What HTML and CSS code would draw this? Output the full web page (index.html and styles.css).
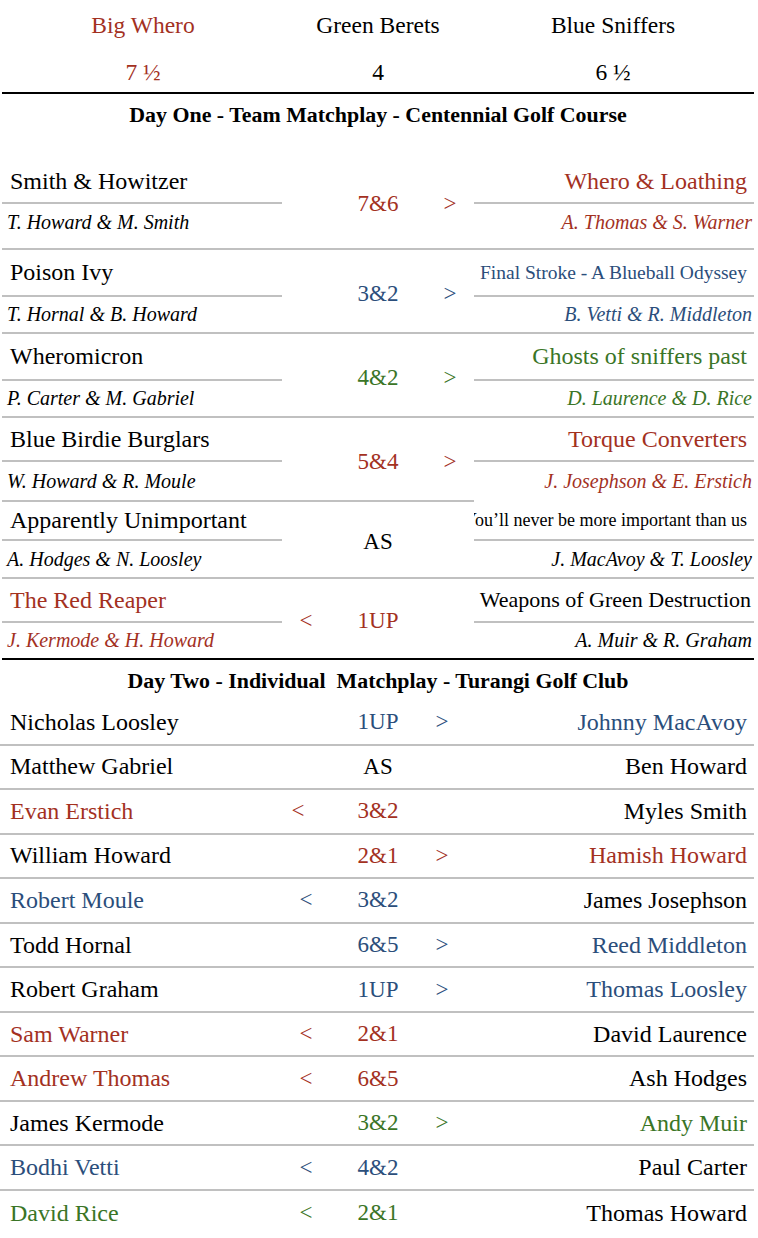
FILE: index.html
```html
<!DOCTYPE html>
<html lang="en">
<head>
<meta charset="utf-8">
<title>Matchplay Results</title>
<link rel="stylesheet" href="styles.css">
</head>
<body>
<div class="page">
  <header class="standings">
    <div class="st-name red">Big Whero</div>
    <div class="st-name">Green Berets</div>
    <div class="st-name">Blue Sniffers</div>
    <div class="st-score red">7 ½</div>
    <div class="st-score">4</div>
    <div class="st-score">6 ½</div>
  </header>

  <h2 class="day-title day-one">Day One - Team Matchplay - Centennial Golf Course</h2>

  <section class="day1">
    <div class="match m1">
      <div class="side left">
        <div class="team">Smith &amp; Howitzer</div>
        <div class="players">T. Howard &amp; M. Smith</div>
      </div>
      <div class="mid red"><span class="arr"></span><span class="score">7&amp;6</span><span class="arr">&gt;</span></div>
      <div class="side right red">
        <div class="team">Whero &amp; Loathing</div>
        <div class="players">A. Thomas &amp; S. Warner</div>
      </div>
    </div>

    <div class="match m2">
      <div class="side left">
        <div class="team">Poison Ivy</div>
        <div class="players">T. Hornal &amp; B. Howard</div>
      </div>
      <div class="mid blue"><span class="arr"></span><span class="score">3&amp;2</span><span class="arr">&gt;</span></div>
      <div class="side right blue">
        <div class="team small-a">Final Stroke - A Blueball Odyssey</div>
        <div class="players">B. Vetti &amp; R. Middleton</div>
      </div>
    </div>

    <div class="match m3">
      <div class="side left">
        <div class="team">Wheromicron</div>
        <div class="players">P. Carter &amp; M. Gabriel</div>
      </div>
      <div class="mid green"><span class="arr"></span><span class="score">4&amp;2</span><span class="arr">&gt;</span></div>
      <div class="side right green">
        <div class="team">Ghosts of sniffers past</div>
        <div class="players">D. Laurence &amp; D. Rice</div>
      </div>
    </div>

    <div class="match m4">
      <div class="side left">
        <div class="team">Blue Birdie Burglars</div>
        <div class="players">W. Howard &amp; R. Moule</div>
      </div>
      <div class="mid red"><span class="arr"></span><span class="score">5&amp;4</span><span class="arr">&gt;</span></div>
      <div class="side right red open">
        <div class="team">Torque Converters</div>
        <div class="players">J. Josephson &amp; E. Erstich</div>
      </div>
    </div>

    <div class="match m5">
      <div class="side left">
        <div class="team">Apparently Unimportant</div>
        <div class="players">A. Hodges &amp; N. Loosley</div>
      </div>
      <div class="mid"><span class="arr"></span><span class="score">AS</span><span class="arr"></span></div>
      <div class="side right">
        <div class="team small-b"><span>You’ll never be more important than us</span></div>
        <div class="players">J. MacAvoy &amp; T. Loosley</div>
      </div>
    </div>

    <div class="match m6 last">
      <div class="side left red">
        <div class="team">The Red Reaper</div>
        <div class="players">J. Kermode &amp; H. Howard</div>
      </div>
      <div class="mid red"><span class="arr">&lt;</span><span class="score">1UP</span><span class="arr"></span></div>
      <div class="side right">
        <div class="team small-c">Weapons of Green Destruction</div>
        <div class="players">A. Muir &amp; R. Graham</div>
      </div>
    </div>
  </section>

  <h2 class="day-title day-two">Day Two - Individual&nbsp; Matchplay - Turangi Golf Club</h2>

  <section class="day2">
    <div class="row"><span class="p-left">Nicholas Loosley</span><span class="arr"></span><span class="score blue">1UP</span><span class="arr blue">&gt;</span><span class="p-right blue">Johnny MacAvoy</span></div>
    <div class="row"><span class="p-left">Matthew Gabriel</span><span class="arr"></span><span class="score">AS</span><span class="arr"></span><span class="p-right">Ben Howard</span></div>
    <div class="row"><span class="p-left red">Evan Erstich</span><span class="arr red shift">&lt;</span><span class="score red">3&amp;2</span><span class="arr"></span><span class="p-right">Myles Smith</span></div>
    <div class="row"><span class="p-left">William Howard</span><span class="arr"></span><span class="score red">2&amp;1</span><span class="arr red">&gt;</span><span class="p-right red">Hamish Howard</span></div>
    <div class="row"><span class="p-left blue">Robert Moule</span><span class="arr blue">&lt;</span><span class="score blue">3&amp;2</span><span class="arr"></span><span class="p-right">James Josephson</span></div>
    <div class="row"><span class="p-left">Todd Hornal</span><span class="arr"></span><span class="score blue">6&amp;5</span><span class="arr blue">&gt;</span><span class="p-right blue">Reed Middleton</span></div>
    <div class="row"><span class="p-left">Robert Graham</span><span class="arr"></span><span class="score blue">1UP</span><span class="arr blue">&gt;</span><span class="p-right blue">Thomas Loosley</span></div>
    <div class="row"><span class="p-left red">Sam Warner</span><span class="arr red">&lt;</span><span class="score red">2&amp;1</span><span class="arr"></span><span class="p-right">David Laurence</span></div>
    <div class="row"><span class="p-left red">Andrew Thomas</span><span class="arr red">&lt;</span><span class="score red">6&amp;5</span><span class="arr"></span><span class="p-right">Ash Hodges</span></div>
    <div class="row"><span class="p-left">James Kermode</span><span class="arr"></span><span class="score green">3&amp;2</span><span class="arr green">&gt;</span><span class="p-right green">Andy Muir</span></div>
    <div class="row"><span class="p-left blue">Bodhi Vetti</span><span class="arr blue">&lt;</span><span class="score blue">4&amp;2</span><span class="arr"></span><span class="p-right">Paul Carter</span></div>
    <div class="row last"><span class="p-left green">David Rice</span><span class="arr green">&lt;</span><span class="score green">2&amp;1</span><span class="arr"></span><span class="p-right">Thomas Howard</span></div>
  </section>
</div>
</body>
</html>
```

FILE: styles.css
```css
* { box-sizing: border-box; }

body {
  margin: 0;
  background: #fff;
  color: #000;
  font-family: "Liberation Serif", "Times New Roman", serif;
}

.page {
  width: 752px;
  margin-left: 2px;
}

.red { color: #a3311f; }
.blue { color: #2b4e7b; }
.green { color: #3a7526; }

/* standings header */
.standings {
  display: grid;
  grid-template-columns: repeat(3, 235px);
  grid-template-rows: 50px 42px;
  justify-content: center;
  border-bottom: 2px solid #000;
  font-size: 23.5px;
}
.st-name, .st-score {
  display: flex;
  align-items: center;
  justify-content: center;
}
.st-score { padding-top: 2px; }

.day-title {
  margin: 0;
  font-size: 21.9px;
  font-weight: bold;
  text-align: center;
  display: flex;
  align-items: center;
  justify-content: center;
  white-space: nowrap;
}
.day-one { height: 42px; margin-bottom: 19px; }
.day-two { height: 41px; }

/* day one matches */
.match {
  display: grid;
  grid-template-columns: 280px 192px 280px;
}
.side {
  display: flex;
  flex-direction: column;
  border-bottom: 2px solid #c0c0c0;
  min-width: 0;
}
.side.open { border-bottom-color: transparent; }
.mid {
  display: grid;
  grid-template-columns: 48px 96px 48px;
  align-items: center;
  justify-items: center;
  padding-top: 5px;
  border-bottom: 2px solid #c0c0c0;
  font-size: 23px;
}
.match.last .side,
.match.last .mid { border-bottom: 2px solid #000; }

.team {
  display: flex;
  align-items: center;
  font-size: 24px;
  white-space: nowrap;
  border-bottom: 2px solid #c0c0c0;
  overflow: hidden;
}
.players {
  display: flex;
  align-items: center;
  flex: 1;
  font-size: 20px;
  font-style: italic;
  white-space: nowrap;
}
.left .team { padding-left: 8px; }
.left .players { padding-left: 5px; }
.right .team { justify-content: flex-end; padding-right: 7px; }
.right .players { justify-content: flex-end; padding-right: 2px; }

.team.small-a { font-size: 19.5px; }
.team.small-b { font-size: 18px; }
.team.small-c { font-size: 22px; padding-right: 3px; }

.m1 .team { height: 49px; padding-top: 5px; }
.m1 .players { padding-bottom: 8px; }
.m2 .team, .m3 .team { height: 47px; }
.m4 .team { height: 44px; }
.m5 .team { height: 39px; }
.m6 .team { height: 44px; }
.m1 .side, .m1 .mid { height: 95px; }
.m2 .side, .m2 .mid,
.m3 .side, .m3 .mid,
.m4 .side, .m4 .mid { height: 84px; }
.m5 .side, .m5 .mid { height: 77px; }
.m6 .side, .m6 .mid { height: 81px; }

/* day two */
.row {
  display: grid;
  grid-template-columns: 282px 48px 96px 32px 1fr;
  align-items: center;
  height: 44.55px;
  border-bottom: 2px solid #c0c0c0;
  font-size: 24px;
  margin-left: -2px;
}
.row.last { border-bottom: none; }
.row .p-left { padding-left: 10px; white-space: nowrap; }
.row .p-right { text-align: right; padding-right: 7px; white-space: nowrap; }
.row .arr { text-align: center; font-size: 23px; }
.row .arr.shift { transform: translateX(-8px); }
.row .score { text-align: center; font-size: 23px; }
```
